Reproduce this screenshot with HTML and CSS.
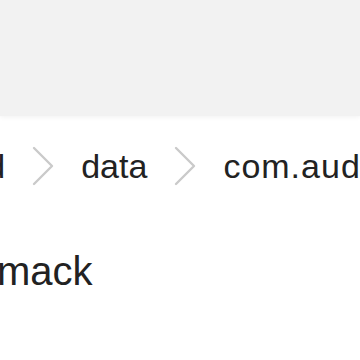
FILE: index.html
```html
<!DOCTYPE html>
<html>
<head>
<meta charset="utf-8">
<link rel="stylesheet" href="styles.css">
</head>
<body>
<div class="toolbar"></div>
<nav class="crumbs">
  <span class="crumb first">Android</span>
  <svg class="chev" width="22" height="40" viewBox="0 0 22 40"><path d="M2 2 L20 20 L2 38" fill="none" stroke="#cacaca" stroke-width="2.4" stroke-linecap="round" stroke-linejoin="round"/></svg>
  <span class="crumb">data</span>
  <svg class="chev" width="22" height="40" viewBox="0 0 22 40"><path d="M2 2 L20 20 L2 38" fill="none" stroke="#cacaca" stroke-width="2.4" stroke-linecap="round" stroke-linejoin="round"/></svg>
  <span class="crumb current">com.audiomack</span>
</nav>
<h1 class="title">mack</h1>
</body>
</html>
```
FILE: styles.css
```css
html, body {
  margin: 0;
  padding: 0;
  background: #ffffff;
  overflow: hidden;
  font-family: "Liberation Sans", Arial, sans-serif;
}
.toolbar {
  height: 116px;
  background: #f2f2f2;
  box-shadow: 0 1px 5px rgba(0, 0, 0, 0.06);
}
.crumbs {
  display: flex;
  align-items: center;
  gap: 27px;
  margin-top: 30px;
  height: 40px;
  white-space: nowrap;
  font-size: 34px;
  line-height: 40px;
  color: #222222;
}
.crumb { flex: none; }
.first { margin-left: -112px; }
.current { letter-spacing: 1px; }
.chev { flex: none; display: block; }
.title {
  margin: 62px 0 0 -3px;
  font-size: 40px;
  line-height: 46px;
  font-weight: normal;
  color: #222222;
}
```
